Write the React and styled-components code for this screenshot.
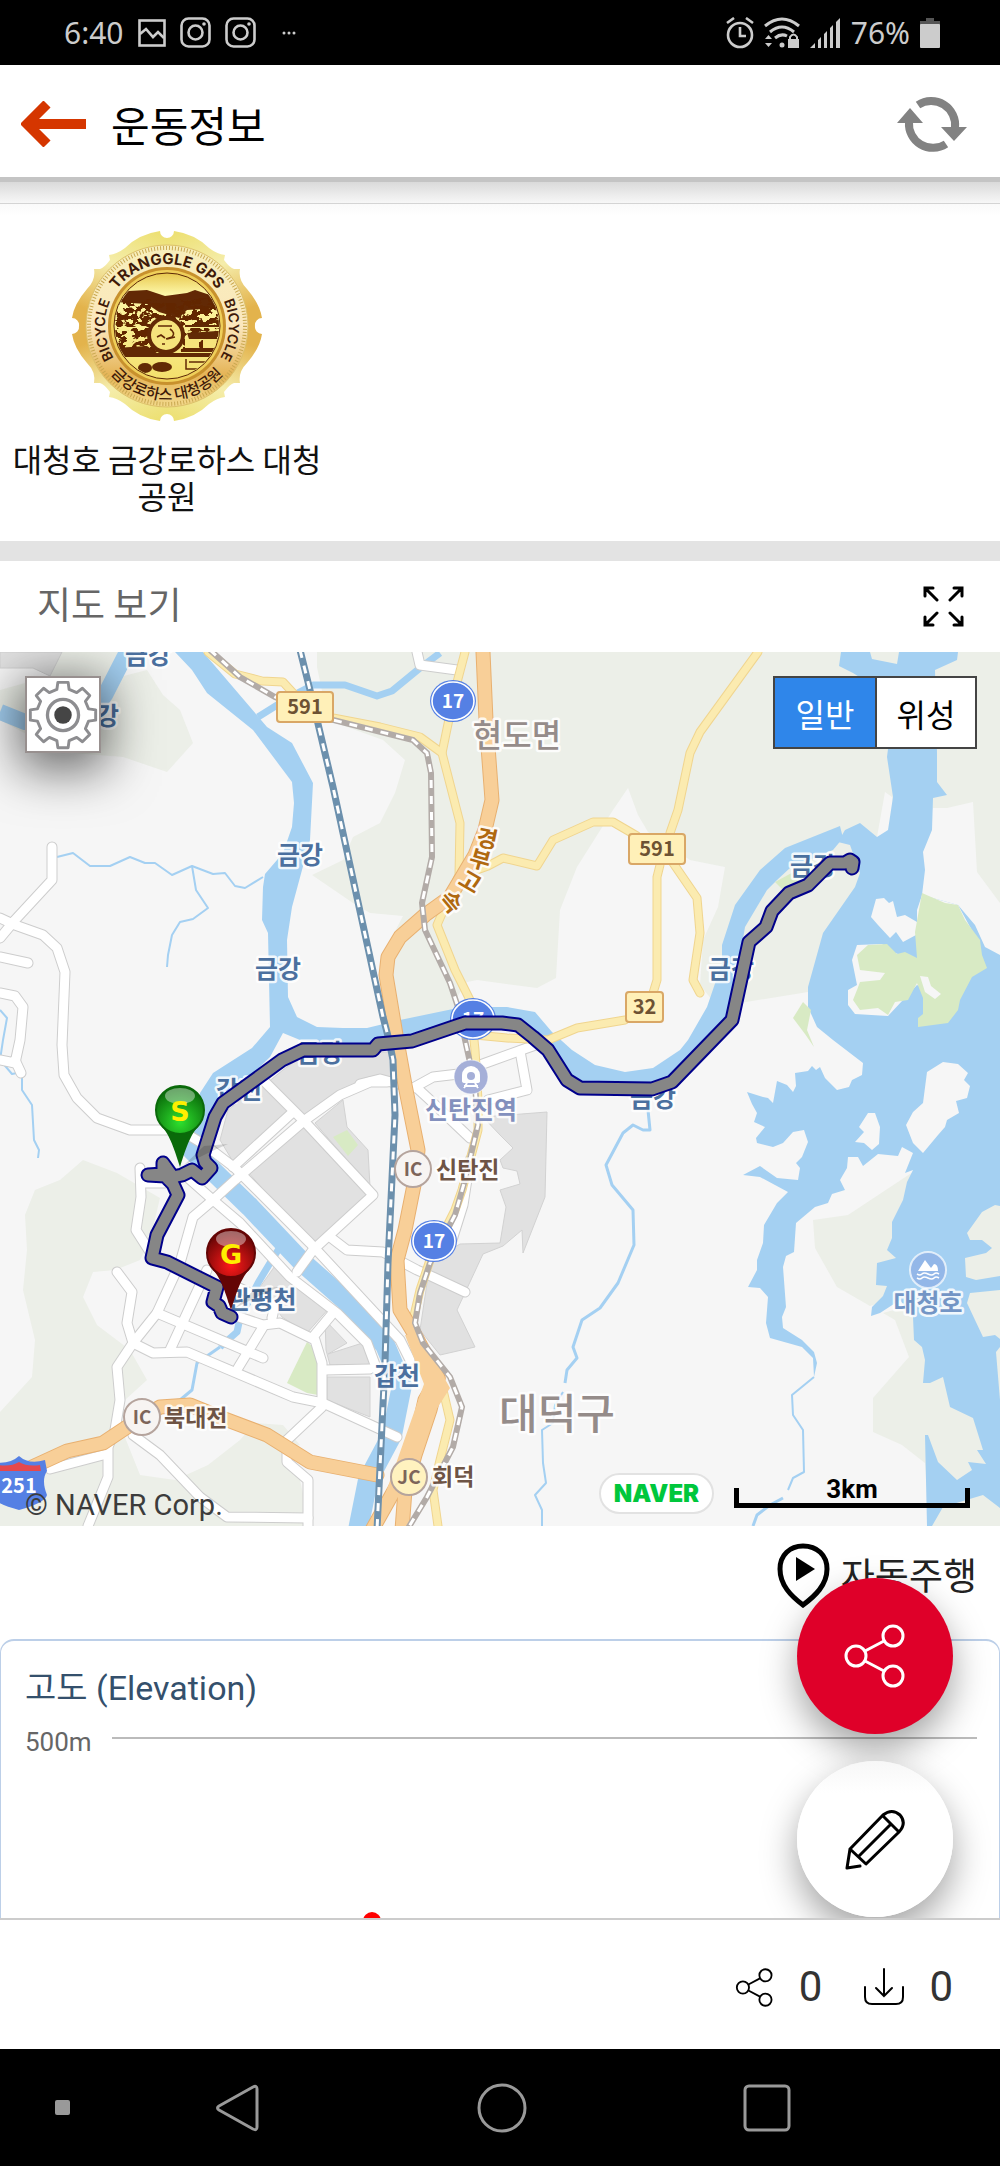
import React, { useState } from 'react';
import styled, { createGlobalStyle } from 'styled-components';

const GlobalStyle = createGlobalStyle`
    * { box-sizing: border-box; }
    body {
        margin: 0;
        background: #fff;
        font-family: Roboto, "Noto Sans CJK KR", sans-serif;
    }
    button {
        font-family: inherit;
        border: 0;
        padding: 0;
        margin: 0;
        background: none;
        color: inherit;
    }
    svg { display: block; }
`;

const Screen = styled.div`
    display: flex;
    flex-direction: column;
    height: 100vh;
    overflow: hidden;
`;

const StatusBar = styled.div`
    display: flex;
    justify-content: space-between;
    align-items: center;
    flex: none;
    height: 65px;
    padding: 0 60px 0 64px;
    background: #000;
    color: #ccc;
    font-family: "Noto Sans", sans-serif;
    font-size: 30px;
`;

const StatusGroup = styled.div`
    display: flex;
    align-items: center;
    gap: ${props => props.$gap}px;
`;

const Header = styled.header`
    display: flex;
    align-items: center;
    flex: none;
    height: 112px;
    padding: 5px 32px 0 21px;
    background: #fff;
`;

const Title = styled.h1`
    flex: 1;
    margin: 0 0 0 24px;
    padding-top: 8px;
    font-size: 42px;
    font-weight: 400;
    line-height: 60px;
    color: #000;
`;

const Content = styled.main`
    position: relative;
    flex: 1;
    min-height: 0;
    overflow: hidden;
`;

const HeaderShadow = styled.div`
    height: 27px;
    border-top: 5px solid #c4c4c4;
    border-bottom: 1px solid #d4d4d4;
    background: linear-gradient(#dadada, #f7f7f7);
`;

const BadgeSection = styled.section`
    padding: 26px 0 27px;
    background: linear-gradient(#fafafa, #fff 12px);
    border-bottom: 20px solid #e3e3e3;
`;

const Badge = styled.figure`
    display: flex;
    flex-direction: column;
    align-items: center;
    width: 334px;
    margin: 0;
`;

const BadgeName = styled.figcaption`
    margin-top: 18px;
    font-family: "Noto Sans CJK KR", sans-serif;
    font-size: 32px;
    line-height: 37px;
    text-align: center;
    color: #111;
    word-break: break-all;
`;

const MapHead = styled.div`
    display: flex;
    justify-content: space-between;
    align-items: center;
    height: 91px;
    padding: 0 36px 0 37px;
`;

const MapTitle = styled.h2`
    margin: 0 0 8px;
    font-family: "Noto Sans CJK KR", sans-serif;
    font-size: 37px;
    font-weight: 400;
    line-height: 54px;
    color: #666;
`;

const MapBox = styled.div`
    position: relative;
    overflow: hidden;
`;

const GearButton = styled.button`
    position: absolute;
    top: 24px;
    left: 25px;
    display: grid;
    place-items: center;
    width: 76px;
    height: 77px;
    border: 2px solid #98908f;
    background: #fff;
    box-shadow: 0 10px 50px 6px rgba(0, 0, 0, 0.6);
`;

const MapTypes = styled.div`
    position: absolute;
    top: 24px;
    right: 23px;
    display: flex;
    border: 2px solid #444;
    background: #fff;
`;

const MapType = styled.button`
    width: 100px;
    height: 69px;
    font-family: "Noto Sans CJK KR", sans-serif;
    font-size: 32px;
    line-height: 48px;
    background: ${props => (props.$on ? '#2f86ea' : '#fff')};
    color: ${props => (props.$on ? '#fff' : '#000')};

    & + & {
        border-left: 2px solid #444;
    }
`;

const Copyright = styled.small`
    position: absolute;
    left: 25px;
    bottom: 4px;
    font-size: 29px;
    line-height: 34px;
    color: #3c3c3c;
`;

const MapLegend = styled.div`
    position: absolute;
    right: 30px;
    bottom: 12px;
    display: flex;
    align-items: flex-end;
    gap: 20px;
`;

const NaverLogo = styled.span`
    width: 115px;
    height: 41px;
    border: 2px solid #e2e2e2;
    border-radius: 21px;
    background: #fff;
    color: #00c73c;
    font-family: Inter, sans-serif;
    font-size: 24px;
    font-weight: 900;
    line-height: 37px;
    text-align: center;
`;

const ScaleBar = styled.span`
    display: flex;
    justify-content: center;
    align-items: flex-end;
    width: 236px;
    height: 20px;
    margin-bottom: 6px;
    border: solid #000;
    border-width: 0 5px 5px;
    font-size: 26px;
    font-weight: 700;
    line-height: 27px;
    color: #000;
`;

const AutoPlayRow = styled.div`
    display: flex;
    justify-content: flex-end;
    height: 113px;
    padding: 17px 23px 0;
`;

const AutoPlay = styled.button`
    display: flex;
    align-items: flex-start;
    gap: 11px;
    font-family: "Noto Sans CJK KR", sans-serif;
    font-size: 37px;
    line-height: 62px;
    color: #222;
`;

const ChartCard = styled.section`
    height: 480px;
    padding: 24px 22px 0 24px;
    border: solid #bccfe8;
    border-width: 2px 1px;
    border-radius: 14px;
`;

const ChartTitle = styled.h3`
    margin: 0;
    font-size: 34px;
    font-weight: 400;
    line-height: 46px;
    color: #34506c;
`;

const ChartRow = styled.div`
    display: flex;
    align-items: flex-start;
    margin-top: 14px;
    color: #666;
    font-size: 26px;
    line-height: 34px;
`;

const Plot = styled.div`
    flex: 1;
    margin: 12px 0 0 20px;
    border-top: 2px solid #bbb;
`;

const Peak = styled.div`
    width: 18px;
    height: 18px;
    margin: 173px 0 0 251px;
    border-radius: 50%;
    background: #f00;
`;

const FabStack = styled.div`
    position: absolute;
    right: 47px;
    bottom: 1px;
    display: flex;
    flex-direction: column;
    gap: 27px;
`;

const Fab = styled.button`
    display: grid;
    place-items: center;
    width: 156px;
    height: 156px;
    border-radius: 50%;
    background: ${props => (props.$primary ? '#df0029' : 'linear-gradient(#f7f7f7, #fff 32px)')};
    color: ${props => (props.$primary ? '#fff' : '#000')};
    box-shadow: 0 16px 36px rgba(0, 0, 0, 0.36);
`;

const Footer = styled.footer`
    display: flex;
    justify-content: flex-end;
    align-items: center;
    flex: none;
    gap: 42px;
    height: 131px;
    padding: 5px 47px 0;
    border-top: 2px solid #ccc;
    background: #fff;
`;

const Counter = styled.button`
    display: flex;
    align-items: center;
    gap: 25px;
    font-size: 42px;
    line-height: 50px;
    color: #333;
`;

const NavBar = styled.nav`
    display: grid;
    grid-template-columns: 84px repeat(3, 1fr);
    flex: none;
    height: 117px;
    padding: 0 100px 0 20px;
    background: #000;
`;

const NavButton = styled.button`
    display: grid;
    place-items: center;
`;

const MapSvg = styled.svg`
    width: 100%;
    height: auto;
    font-family: "Noto Sans CJK KR", sans-serif;
    font-weight: 700;
`;

const Halo = styled.text`
    paint-order: stroke;
    stroke: #fff;
    stroke-opacity: 0.85;
    stroke-width: 5px;
    stroke-linejoin: round;
    fill: ${props => props.$color};
    font-size: ${props => props.$size}px;
    font-weight: ${props => props.$weight || 700};
    text-anchor: ${props => props.$anchor || 'middle'};
`;

const FOREST = [
    '62,652 120,652 108,680 147,670 163,695 180,710 193,743 167,772 123,757 60,752 0,720 0,690 50,676',
    '317,652 317,667 328,720 383,740 405,760 395,793 380,823 353,837 343,860 312,875 353,903 370,913 403,916 380,960 393,1022 455,1012 455,1000 467,982 477,980 537,988 556,978 560,910 577,867 613,810 628,788 638,815 648,832 690,860 725,867 718,907 703,940 700,985 720,1010 740,1003 808,992 1000,990 1000,652',
    '83,1160 117,1173 160,1198 150,1240 140,1260 115,1270 93,1272 83,1297 97,1325 130,1350 147,1380 125,1400 120,1425 130,1450 140,1475 175,1480 208,1465 240,1440 255,1423 283,1425 300,1445 283,1450 300,1480 310,1526 0,1526 0,1412 32,1377 35,1340 23,1290 27,1250 25,1215 35,1190 60,1180',
    '813,1220 848,1215 913,1172 930,1172 930,1300 883,1313 895,1320 909,1357 873,1398 873,1432 902,1445 925,1463 930,1526 1000,1526 1000,1320 920,1290 870,1306 837,1287 815,1248',
];

const CLEARING = [
    '885,792 892,797 896,830 877,837',
    '933,808 947,808 973,802 977,872 1000,903 1000,995 915,995 915,850',
];

const WATER = [
    // river
    '175,652 192,670 207,693 253,730 292,782 294,803 292,827 283,853 265,874 263,887 262,920 268,933 270,1027 252,1048 213,1073 200,1093 197,1140 207,1150 223,1103 270,1057 283,1033 300,1040 373,1048 412,1041 465,1023 502,1023 533,1037 548,1050 567,1080 580,1088 652,1089 672,1082 723,1030 735,1000 742,945 745,927 767,890 777,880 790,868 833,850 843,838 840,826 785,848 760,870 735,905 722,945 722,963 707,1007 688,1040 680,1050 653,1068 625,1072 595,1065 572,1050 552,1032 535,1012 507,1007 492,1007 453,1009 400,1020 367,1028 343,1028 317,1027 297,1017 288,997 287,940 292,907 302,870 310,840 313,783 292,743 267,727 203,652',
    // lake
    '841,652 839,666 853,673 880,690 888,749 887,757 893,797 888,830 877,837 860,823 845,830 838,842 850,845 860,873 855,887 823,933 808,987 808,1007 817,1027 833,1040 863,1063 862,1075 852,1080 849,1087 837,1090 825,1078 820,1067 816,1070 812,1066 808,1071 795,1073 796,1086 793,1092 787,1085 777,1081 773,1103 768,1098 763,1097 747,1092 752,1104 757,1113 754,1122 765,1127 756,1138 757,1143 773,1147 783,1143 793,1132 804,1130 808,1142 802,1157 796,1163 800,1168 798,1180 777,1178 760,1166 743,1175 760,1177 788,1192 777,1203 764,1225 763,1243 757,1260 757,1270 748,1287 760,1288 768,1297 766,1323 770,1338 802,1347 813,1358 814,1377 817,1363 814,1352 802,1340 783,1328 782,1317 786,1307 783,1267 786,1256 794,1252 796,1223 815,1207 828,1203 832,1194 845,1190 840,1180 847,1168 848,1157 858,1157 863,1166 878,1154 898,1156 902,1147 913,1153 905,1173 913,1170 907,1182 903,1200 892,1222 892,1238 887,1250 896,1258 877,1263 876,1285 887,1286 883,1296 872,1307 871,1316 880,1313 900,1300 913,1317 914,1340 922,1347 925,1360 923,1383 930,1383 943,1377 950,1407 973,1418 983,1450 977,1450 986,1464 968,1462 972,1470 957,1480 938,1462 928,1435 925,1435 927,1526 932,1526 943,1507 983,1495 1000,1508 1000,955 985,947 975,925 958,905 922,895 925,870 923,852 932,830 933,798 947,795 937,782 937,753 935,670 957,660 958,652',
];

const ISLANDS = [
    { fill: '#ecefe8', pts: '870,652 872,659 897,664 899,652' },
    { fill: '#f6f6f6', pts: '943,1062 958,1064 968,1073 964,1080 970,1086 967,1098 956,1101 959,1113 947,1120 945,1127 938,1135 923,1153 913,1143 906,1125 913,1112 923,1103 927,1072' },
    { fill: '#f6f6f6', pts: '868,1113 875,1113 880,1127 879,1144 872,1150 864,1143 855,1142 864,1132 859,1127' },
    { fill: '#f6f6f6', pts: '876,899 884,898 889,903 893,901 897,917 905,915 917,922 917,910 922,895 958,905 980,945 917,960 895,953 882,944 857,945 852,960 855,975 857,985 848,990 848,1005 855,1014 888,1016 917,985 948,1000 930,960 916,935 903,942 896,932 890,938 878,925 871,917' },
    { fill: '#ecefe8', pts: '1000,1206 995,1205 982,1212 967,1233 970,1240 982,1240 992,1248 986,1253 965,1258 966,1277 976,1280 1000,1276' },
    { fill: '#ecefe8', pts: '1000,1290 970,1293 967,1303 983,1337 995,1335 1000,1339' },
    { fill: '#ecefe8', pts: '1000,1347 996,1352 1000,1400' },
    { fill: '#d8eac4', pts: '922,893 945,903 958,905 965,920 980,940 982,955 987,968 972,977 960,1000 958,1010 948,1023 918,1027 918,1018 923,1014 923,998 917,983 908,1000 895,1002 888,1015 878,1008 860,1010 853,1000 857,990 860,982 880,980 885,973 860,970 857,955 868,945 887,944 897,954 905,952 917,958 915,932' },
    { fill: '#f6f6f6', pts: '920,976 928,977 931,986 941,994 935,999 925,992' },
    { fill: '#d8eac4', pts: '803,1002 811,1010 807,1030 814,1047 805,1034 793,1018' },
    { fill: '#d8eac4', pts: '775,882 812,862 830,862 812,885 785,892' },
];

const URBAN = [
    '0,652 62,652 50,676 33,668 0,668',
    '283,1070 302,1056 380,1052 392,1052 392,1085 370,1080 345,1095 305,1118 267,1083',
    '235,1165 220,1140 228,1110 262,1083 288,1110',
    '248,1172 303,1127 370,1195 328,1238 313,1247',
    '343,1100 347,1127 368,1150 370,1187 315,1123',
    '277,1263 330,1307 307,1333 282,1317 260,1287',
    '325,1320 347,1343 328,1354 372,1340 376,1365 330,1365 326,1350',
    '327,1377 370,1377 370,1417 327,1400',
    '483,1117 547,1112 545,1197 523,1253 522,1230 503,1246 483,1254 457,1310 475,1347 440,1355 420,1330 430,1263 460,1244 500,1243 503,1225 506,1207 500,1190 520,1184 517,1171 503,1168 500,1160 513,1148 500,1135',
];

const PARKS = [
    '333,1137 347,1130 358,1145 348,1156',
    '307,1342 317,1350 318,1395 307,1393 287,1383',
];

const STREAMS = [
    { w: 7, pts: '258,717 290,697 313,685 345,685 377,696 392,691 420,668 440,653' },
    { w: 16, pts: '128,650 105,695 88,718 25,722 0,712' },
    { w: 2, pts: '57,857 73,853 90,866 110,866 130,857 145,863 155,863 172,875 192,866 213,874 225,873 235,886 245,888 263,877' },
    { w: 2, pts: '192,866 196,890 208,908 193,919 180,922 172,935 168,955 167,967' },
    { w: 2, pts: '0,1010 7,1018 3,1040 0,1060 12,1074 22,1072 22,1090 32,1105 34,1140 39,1150 38,1158' },
    { w: 3, pts: '648,1110 650,1130 643,1130 633,1125 623,1133 606,1165 612,1185 633,1210 634,1245 618,1283 600,1308 582,1320 573,1347 577,1358 567,1370 565,1383' },
    { w: 2, pts: '563,1392 555,1405 553,1423 542,1430 543,1463 546,1483 535,1495 542,1510 542,1526' },
    { w: 2, pts: '814,1377 792,1395 793,1415 803,1430 804,1472 793,1478 788,1490' },
    { w: 3, pts: '783,1498 770,1505 757,1515 753,1526' },
    { w: 7, pts: '280,1247 270,1263 258,1283 240,1318 237,1332 220,1347' },
    { w: 3, pts: '220,1347 197,1363 192,1390 180,1400 157,1403' },
    { w: 20, pts: '193,1110 192,1150 215,1173 250,1207 302,1262 345,1300 385,1345 402,1385 392,1435 368,1480 358,1530' },
];

const STREETS = [
    '52,847 52,880 15,920 0,938',
    '0,918 15,925 43,935 57,948 65,972 62,1045 64,1075 77,1098 97,1118 130,1130 180,1130 205,1145 235,1168 310,1243 400,1340 410,1360',
    '0,957 28,963',
    '0,993 15,996 23,1007 20,1040 15,1063 0,1060',
    '15,1060 21,1073',
    '165,1183 142,1183',
    '140,1168 141,1197 136,1230 150,1252',
    '187,1177 213,1200 240,1223 290,1277 337,1313 367,1343 377,1370',
    '213,1200 235,1180 305,1120 340,1095 370,1082 387,1082',
    '265,1082 305,1122 373,1195 313,1250 297,1272',
    '233,1167 293,1112',
    '213,1200 193,1217 180,1263 157,1313 133,1343 117,1367 120,1400 115,1430 108,1447 108,1477 88,1526',
    '117,1272 132,1292 127,1323 133,1343',
    '133,1343 153,1353 187,1352 293,1397 323,1403 397,1437',
    '157,1313 263,1358',
    '207,1270 170,1350',
    '263,1327 238,1368',
    '233,1285 275,1305 272,1318',
    '233,1315 263,1325 280,1323 315,1340 322,1363 322,1407 287,1440 287,1462 308,1480 308,1526',
    '333,1313 313,1337',
    '325,1370 370,1369',
    '133,1435 160,1455 200,1497 227,1517 308,1518',
    '330,1237 347,1250 383,1252 417,1270 433,1277 465,1292',
    '50,1469 103,1455',
    '360,1084 380,1079 413,1088 433,1077 467,1073 480,1065 527,1048 547,1041',
    '520,1051 527,1090 488,1100',
    '417,1088 430,1100 470,1138',
    '470,1160 463,1205 452,1240',
    '417,652 420,665 457,670',
];

const YELLOW_ROADS = [
    '208,652 235,674 262,681 283,682 295,695 333,718 380,727 420,737 442,753 460,823 459,875 437,925 455,970 470,1000 475,1050 478,1100 478,1130 462,1190 455,1210 430,1260 420,1290 413,1320',
    '443,1390 450,1420 440,1460 433,1490 438,1526',
    '465,652 455,690 442,753',
    '460,876 488,866 503,858 537,866 553,840 593,822 613,822 637,836',
    '758,652 700,732 690,753 678,810 670,833',
    '660,865 657,877 657,980 653,993',
    '673,863 697,898 700,933 693,980 700,993',
    '625,1020 577,1028 548,1040 507,1038 475,1035',
];

const HIGHWAYS = [
    '483,652 486,720 492,800 485,830 475,855 450,897 425,915 400,937 388,957 386,975 396,1035 405,1085 418,1150 415,1180 405,1230 397,1260 400,1310 415,1335 438,1378 425,1400 416,1440 400,1480 372,1530',
    '438,1378 430,1410 415,1455 405,1490 402,1530',
    '0,1495 30,1468 67,1451 103,1443 133,1423 160,1407 190,1405 222,1418 267,1435 310,1462 377,1475',
];

const RAIL = '210,650 240,677 275,697 333,720 393,735 413,740 427,753 431,773 432,857 422,903 425,930 450,983 458,1007 465,1040 475,1085 478,1125 465,1180 455,1215 430,1263 420,1293 415,1323 423,1343 450,1377 462,1407 453,1447 427,1497 407,1530';
const KTX_RAIL = '300,650 310,690 333,787 383,1017 389,1040 393,1060 395,1115 388,1263 385,1363 377,1530';

const ROUTE = '852,868 853,862 850,860 845,863 830,863 808,885 789,893 772,911 766,927 749,942 732,1020 672,1082 652,1089 580,1088 567,1080 548,1050 533,1037 518,1025 502,1023 465,1023 412,1041 378,1044 373,1050 303,1050 282,1060 223,1103 215,1117 203,1155 205,1162 211,1168 202,1178 192,1170 182,1175 173,1177 163,1163 163,1174 148,1175 165,1176 173,1184 178,1195 157,1235 152,1258 167,1262 217,1287 213,1302 219,1306 222,1313 231,1317';

const RIVER_LABELS = [
    [148, 664, '금강'], [96, 725, '금강'], [300, 864, '금강'], [278, 978, '금강'], [320, 1062, '금강'],
    [813, 875, '금강'], [731, 978, '금강'], [653, 1107, '금강'], [239, 1099, '갑천'], [397, 1385, '갑천'],
    [262, 1309, '관평천'],
];

const HIGHWAY_LABEL = [
    [487, 839, 12, '경'], [480, 860, 16, '부'], [470, 882, 30, '고'], [451, 902, 50, '속'],
];

const Road = ({ list, edge, fill, width }) => (
    <g fill="none" strokeLinejoin="round" strokeLinecap="round">
        {list.map(p => <polyline key={p} points={p} stroke={edge} strokeWidth={width + 2} />)}
        {list.map(p => <polyline key={p} points={p} stroke={fill} strokeWidth={width} />)}
    </g>
);

const Railway = ({ points, color, width }) => (
    <g fill="none">
        <polyline points={points} stroke={color} strokeWidth={width} />
        <polyline points={points} stroke="#fff" strokeWidth="3" strokeDasharray="8 8" />
    </g>
);

const LocalRoad = ({ x, y, w, children }) => (
    <g>
        <rect x={x} y={y} width={w} height="30" rx="3" fill="#fff0b8" stroke="#d9a766" strokeWidth="2" />
        <text x={x + w / 2} y={y + 22} fontSize="20" textAnchor="middle" fill="#6d5233">{children}</text>
    </g>
);

const NationalRoad = ({ x, y }) => (
    <g>
        <ellipse cx={x} cy={y} rx="23" ry="21" fill="#5580e4" />
        <ellipse cx={x} cy={y} rx="21" ry="19" fill="none" stroke="#fff" strokeWidth="1.6" />
        <text x={x} y={y + 7} fontSize="19" textAnchor="middle" fill="#fff">17</text>
    </g>
);

const Junction = ({ x, y, fill, children }) => (
    <g>
        <circle cx={x} cy={y} r="18" fill={fill} stroke="#b5a49d" strokeWidth="2" />
        <text x={x} y={y + 7} fontSize="19" textAnchor="middle" fill="#7d655a">{children}</text>
    </g>
);

const Pin = ({ x, y, from, to, id, children }) => (
    <g transform={`translate(${x} ${y})`}>
        <defs>
            <radialGradient id={id} cx="50%" cy="75%" r="70%">
                <stop offset="0" stopColor={to} />
                <stop offset="1" stopColor={from} />
            </radialGradient>
        </defs>
        <path d="M4 55 L24 36 L48 34 L30 42 Z" fill="#000" opacity="0.14" />
        <path d="M-20 14 C-12 24 -9 28 0 57 C9 28 12 24 20 14 Z" fill={from} />
        <circle r="24" fill={`url(#${id})`} stroke={from} strokeWidth="2" />
        <ellipse cy="-14" rx="15" ry="8" fill="#fff" opacity="0.4" />
        <text y="11" fontFamily="DejaVu Sans, sans-serif" fontSize="27" fontWeight="700" textAnchor="middle" fill="#ffef00">
            {children}
        </text>
    </g>
);

const TrackMap = () => (
    <MapSvg viewBox="0 652 1000 874" role="img" aria-label="운동 경로 지도">
        <rect y="652" width="1000" height="874" fill="#f6f6f6" />
        {FOREST.map(p => <polygon key={p} points={p} fill="#ecefe8" />)}
        {CLEARING.map(p => <polygon key={p} points={p} fill="#f6f6f6" />)}
        {URBAN.map(p => <polygon key={p} points={p} fill="#e1e1e1" stroke="#d2d2d2" />)}
        {PARKS.map(p => <polygon key={p} points={p} fill="#d8eac4" />)}
        {WATER.map(p => <polygon key={p} points={p} fill="#a4d0f2" />)}
        {ISLANDS.map(i => <polygon key={i.pts} points={i.pts} fill={i.fill} />)}
        {STREAMS.map(s => (
            <polyline key={s.pts} points={s.pts} fill="none" stroke="#a4d0f2" strokeWidth={s.w} strokeLinejoin="round" />
        ))}
        <Road list={STREETS} edge="#cdcdcd" fill="#fff" width={9} />
        <Road list={YELLOW_ROADS} edge="#f0d58f" fill="#fbebb0" width={7} />
        <Road list={HIGHWAYS} edge="#e8b070" fill="#f8cf98" width={13} />
        <polygon points="405,1335 420,1335 450,1388 436,1410 420,1440 395,1500 385,1495 424,1384" fill="#f8cf98" />
        <Railway points={RAIL} color="#b2aba7" width="6" />
        <Railway points={KTX_RAIL} color="#6c90ad" width="7" />

        <NationalRoad x={453} y={701} />
        <NationalRoad x={473} y={1019} />
        <NationalRoad x={434} y={1241} />
        <LocalRoad x={277} y={692} w={56}>591</LocalRoad>
        <LocalRoad x={629} y={834} w={56}>591</LocalRoad>
        <LocalRoad x={626} y={992} w={37}>32</LocalRoad>

        {RIVER_LABELS.map(([x, y, name]) => (
            <Halo key={`${x}-${y}`} x={x} y={y} $size={25} $color="#4b709f">{name}</Halo>
        ))}
        {HIGHWAY_LABEL.map(([x, y, angle, char]) => (
            <Halo key={char} transform={`translate(${x} ${y}) rotate(${angle})`} y="8" $size={23} $color="#b0690f">{char}</Halo>
        ))}
        <Halo x="517" y="747" $size={32} $color="#958c8a" $weight={500}>현도면</Halo>
        <Halo x="557" y="1429" $size={42} $color="#958c8a" $weight={500}>대덕구</Halo>
        <Halo x="471" y="1119" $size={25} $color="#8390bd">신탄진역</Halo>
        <Halo x="928" y="1312" $size={25} $color="#7395c5">대청호</Halo>
        <Halo x="436" y="1178" $size={23} $color="#6e5445" $anchor="start">신탄진</Halo>
        <Halo x="164" y="1426" $size={23} $color="#6e5445" $anchor="start">북대전</Halo>
        <Halo x="432" y="1485" $size={23} $color="#6e5445" $anchor="start">회덕</Halo>
        <Junction x={413} y={1169} fill="#f7f4f2">IC</Junction>
        <Junction x={142} y={1417} fill="#f7f4f2">IC</Junction>
        <Junction x={409} y={1477} fill="#fff2bf">JC</Junction>

        {/* station */}
        <g transform="translate(471 1077)">
            <circle r="17" fill="#a5afd8" stroke="#fff" strokeOpacity="0.6" />
            <path d="M-7 11 L-4 6 M7 11 L4 6 M-7 9 H7" stroke="#fff" strokeWidth="2" />
            <path d="M-9 4 V-2 A9 9 0 0 1 9 -2 V4 Q9 6 6 6 H-6 Q-9 6 -9 4 Z" fill="#fff" />
            <circle cy="-1" r="4" fill="#a5afd8" />
        </g>

        {/* lake */}
        <g transform="translate(928 1270)">
            <circle r="18" fill="#93b7e8" stroke="#fff" strokeOpacity="0.7" strokeWidth="2" />
            <path d="M-10 1 L-3 -10 L3 -2 L6 -6 Q10 -6 10 1 Z" fill="#fff" />
            <path d="M-11 4 q3 2 5 0 t6 0 t6 0 t5 0 M-11 8 q3 2 5 0 t6 0 t6 0 t5 0" fill="none" stroke="#fff" strokeWidth="1.6" />
        </g>

        {/* expressway 251 */}
        <g transform="translate(19 1483)">
            <path d="M-26 -21 Q-10 -18 0 -27 Q10 -18 26 -23 L28 -12 Q22 -3 28 12 Q26 20 0 27 Q-26 20 -28 12 Z" fill="#5580e4" />
            <path d="M-22 -12 V-18 Q-8 -16 0 -21 Q8 -16 21 -18 L22 -12 Z" fill="#e5484d" />
            <text y="10" fontSize="20" textAnchor="middle" fill="#fff">251</text>
        </g>

        <g fill="none" strokeLinejoin="round" strokeLinecap="round">
            <polyline points={ROUTE} stroke="#00008b" strokeWidth="15" />
            <polyline points={ROUTE} stroke="#868686" strokeWidth="11" />
        </g>
        <Pin x={180} y={1110} id="pinStart" from="#0a6a0a" to="#2ee02e">S</Pin>
        <Pin x={231} y={1253} id="pinGoal" from="#640505" to="#ff1a1a">G</Pin>
    </MapSvg>
);

// One quarter of the scalloped rim, mirrored to get the other three
const RIM = 'M0 0 V-88 A7 7 0 0 0 7 -95 Q28 -92 42 -78 Q50 -72 58 -71 L57 -66 Q63 -58 67 -57 L73 -57 Q71 -46 80 -37 Q93 -22 95 -8 A7 7 0 0 0 88 0 Z';

const Medal = () => (
    <svg width="192" height="192" viewBox="-96 -96 192 192" role="img" aria-label="트랭글 배지">
        <defs>
            <linearGradient id="rim" x1="0" y1="0" x2="0.4" y2="1">
                <stop offset="0" stopColor="#ecdf6e" />
                <stop offset="0.5" stopColor="#f5edab" />
                <stop offset="1" stopColor="#e3b34c" />
            </linearGradient>
            <linearGradient id="band" x1="0" y1="0" x2="0" y2="1">
                <stop offset="0" stopColor="#f7efbb" />
                <stop offset="0.5" stopColor="#fbe7bd" />
                <stop offset="0.8" stopColor="#e5b457" />
                <stop offset="1" stopColor="#f3da8e" />
            </linearGradient>
            <linearGradient id="coin" x1="0" y1="0" x2="0" y2="1">
                <stop offset="0" stopColor="#e8c84e" />
                <stop offset="0.2" stopColor="#fdf7a8" />
                <stop offset="1" stopColor="#f4df6c" />
            </linearGradient>
            <clipPath id="coinClip"><circle r="52" /></clipPath>
            <filter id="grain" x="0" y="0" width="1" height="1">
                <feTurbulence type="fractalNoise" baseFrequency="0.12 0.18" numOctaves="3" seed="4" />
                <feColorMatrix values="0 0 0 0 0.12  0 0 0 0 0.02  0 0 0 0 0  22 0 0 0 -10.2" />
                <feComposite in2="SourceGraphic" operator="in" />
            </filter>
            <path id="topArc" d="M0 62 A62 62 0 0 1 0 -62 A62 62 0 0 1 0 62" />
            <path id="bottomArc" d="M-74 0 A74 74 0 0 0 74 0" />
        </defs>
        {['1 1', '-1 1', '1 -1', '-1 -1'].map(s => (
            <path key={s} d={RIM} transform={`scale(${s})`} fill="url(#rim)" />
        ))}
        <circle r="81" fill="url(#band)" stroke="#dcc069" />
        <circle r="78" fill="none" stroke="#c9a850" strokeWidth="4" strokeDasharray="1 2" />
        <circle r="59" fill="#c8912d" />
        <circle r="56" fill="#efcf5a" />
        <circle r="53" fill="url(#coin)" stroke="#5c2706" />
        <g clipPath="url(#coinClip)">
            <path d="M-54 -32 L-38 -35 L-20 -36 L-2 -30 L20 -33 L28 -36 L40 -32 L54 -30 V-18 L20 -16 L12 -8 L-8 -14 L-20 -22 L-54 -24 Z" fill="#622905" />
            <rect x="-54" y="-27" width="108" height="28" fill="#000" filter="url(#grain)" />
            <rect x="16" y="-28" width="26" height="26" fill="#000" filter="url(#grain)" />
            <rect x="-54" y="2" width="108" height="24" fill="#000" filter="url(#grain)" />
            <path d="M-54 22 L-20 20 L-10 27 H54 V31 H-54 Z M20 7 L50 5 V13 H22 Z M16 22 H54 V26 H16 Z M18 -1 H54 V1 H18 Z" fill="#622905" />
            <path d="M18 13 H32 V22 H18 Z M36 13 H50 V22 H36 Z" fill="#f6e47c" />
            <ellipse cx="-22" cy="42" rx="7" ry="5" fill="#622905" />
            <ellipse cx="-5" cy="41" rx="10" ry="5" fill="#622905" />
            <path d="M19 33 V43 H42 M22 36 H46" fill="none" stroke="#622905" strokeWidth="1.5" />
            <circle cx="-1" cy="9" r="17" fill="#f6e47c" stroke="#622905" strokeWidth="4" />
            <path d="M-9 0 h14 M3 3 q6 4 2 8 l-6 2 M-10 11 l4 -2 l4 3 M0 13 l8 -2 M-5 18 h3" fill="none" stroke="#622905" strokeWidth="1.6" />
        </g>
        <g fill="#3e1a08" fontFamily="Inter, sans-serif" fontWeight="700" textAnchor="middle">
            <text fontSize="15"><textPath href="#topArc" startOffset="50%">TRANGGLE GPS</textPath></text>
            <text fontSize="14" fontWeight="600"><textPath href="#topArc" startOffset="24%">BICYCLE</textPath></text>
            <text fontSize="14" fontWeight="600"><textPath href="#topArc" startOffset="76%">BICYCLE</textPath></text>
            <text fontSize="15" fontWeight="500" fontFamily="Noto Sans CJK KR, sans-serif">
                <textPath href="#bottomArc" startOffset="50%">금강로하스 대청공원</textPath>
            </text>
        </g>
    </svg>
);

const gearPath = () => {
    const pts = [];
    for (let i = 0; i < 8; i++) {
        [[-15, 27], [-10, 34], [10, 34], [15, 27]].forEach(([off, r]) => {
            const a = ((i * 45 + off * 0.9) * Math.PI) / 180;
            pts.push(`${(r * Math.sin(a)).toFixed(1)} ${(-r * Math.cos(a)).toFixed(1)}`);
        });
    }
    return `M${pts.join(' L')} Z`;
};

const GearIcon = () => (
    <svg width="70" height="70" viewBox="-36 -36 72 72">
        <path d={gearPath()} fill="none" stroke="#8d8d90" strokeWidth="3" strokeLinejoin="round" />
        <circle r="16" fill="none" stroke="#8d8d90" strokeWidth="3.4" />
        <circle r="9" fill="#454545" />
    </svg>
);

const ShareIcon = ({ size, weight, color = 'currentColor' }) => (
    <svg width={size} height={size} viewBox="0 0 64 64" fill="none" stroke={color} strokeWidth={weight}>
        <circle cx="13" cy="32" r="10" />
        <circle cx="50" cy="12" r="10" />
        <circle cx="50" cy="52" r="10" />
        <path d="M22 27 L41 17 M22 37 L41 47" />
    </svg>
);

const InstagramIcon = () => (
    <svg width="31" height="31" viewBox="0 0 31 31" fill="none" stroke="#ccc" strokeWidth="2.6">
        <rect x="1.5" y="1.5" width="28" height="28" rx="7" />
        <circle cx="15.5" cy="15.5" r="7" />
        <circle cx="24" cy="7" r="1.8" fill="#ccc" stroke="none" />
    </svg>
);

const StatusIcons = () => (
    <>
        <svg width="28" height="28" viewBox="0 0 28 28" fill="none" stroke="#ccc" strokeWidth="2.6">
            <rect x="1.5" y="1.5" width="25" height="25" />
            <path d="M2 15 L8 10 L15 18 L20 13 L26 19" />
        </svg>
        <InstagramIcon />
        <InstagramIcon />
    </>
);

const AlarmIcon = () => (
    <svg width="28" height="32" viewBox="0 0 28 32" fill="none" stroke="#ccc" strokeWidth="2.6">
        <circle cx="14" cy="18" r="12" />
        <path d="M14 10 V19 H20 M1 6 L8 1 M27 6 L20 1" />
    </svg>
);

const WifiIcon = () => (
    <svg width="36" height="32" viewBox="0 0 36 32" fill="none" stroke="#ccc" strokeWidth="3">
        <path d="M1 9 Q18 -5 35 9 M6 15 Q18 5 30 15 M11 21 Q17 16 23 19" />
        <circle cx="18" cy="28" r="2.5" fill="#ccc" stroke="none" />
        <path d="M1 22 L4.5 18 L8 22 Z M1 26 L4.5 30 L8 26 Z M24 22 H35 V31 H24 Z" fill="#ccc" stroke="none" />
        <path d="M26 23 V20 Q29.5 15 33 20 V23" strokeWidth="2" />
    </svg>
);

const SignalIcon = () => (
    <svg width="31" height="32" viewBox="0 0 31 32" fill="#ccc">
        <path d="M0 31 L5 26 V31 Z M8 23 L11 20 V31 H8 Z M14 17 L17 14 V31 H14 Z M20 11 L23 8 V31 H20 Z M26 5 L30 1 V31 H26 Z" />
    </svg>
);

const BatteryIcon = () => (
    <svg width="20" height="32" viewBox="0 0 20 32">
        <path d="M6 1 H14 V4 H20 V9 H0 V4 H6 Z" fill="#555" />
        <rect y="7" width="20" height="24" rx="1" fill="#ccc" />
    </svg>
);

const App = () => {
    const [mapType, setMapType] = useState('일반');

    return (
        <Screen>
            <GlobalStyle />
            <StatusBar>
                <StatusGroup $gap={14}>
                    <span>6:40</span>
                    <StatusIcons />
                    <svg width="40" height="6" viewBox="0 0 40 6" fill="#ccc">
                        <circle cx="14" cy="3" r="1.5" />
                        <circle cx="19" cy="3" r="1.5" />
                        <circle cx="24" cy="3" r="1.5" />
                    </svg>
                </StatusGroup>
                <StatusGroup $gap={10}>
                    <AlarmIcon />
                    <WifiIcon />
                    <SignalIcon />
                    <span>76%</span>
                    <BatteryIcon />
                </StatusGroup>
            </StatusBar>

            <Header>
                <button type="button" aria-label="뒤로">
                    <svg width="66" height="46" viewBox="0 0 66 46" fill="none" stroke="#d53600" strokeWidth="10">
                        <path d="M65 23 H9 M26 3 L6 23 L26 43" />
                    </svg>
                </button>
                <Title>운동정보</Title>
                <button type="button" aria-label="새로고침">
                    <svg width="72" height="58" viewBox="-36 -29 72 58">
                        <path d="M-14 -19 A24 24 0 0 1 23 4 M14 20 A24 24 0 0 1 -23 -2" fill="none" stroke="#828282" strokeWidth="8" />
                        <path d="M9 3 H35 L22 17 Z M-9 -1 H-35 L-22 -16 Z" fill="#828282" />
                    </svg>
                </button>
            </Header>

            <Content>
                <HeaderShadow />
                <BadgeSection>
                    <Badge>
                        <Medal />
                        <BadgeName>대청호 금강로하스 대청공원</BadgeName>
                    </Badge>
                </BadgeSection>

                <MapHead>
                    <MapTitle>지도 보기</MapTitle>
                    <button type="button" aria-label="전체 화면">
                        <svg width="41" height="41" viewBox="0 0 41 41" fill="none" stroke="#000" strokeWidth="3" strokeLinecap="round">
                            <path d="M2 10 V2 H10 M2 2 L14 14 M31 2 H39 V10 M39 2 L27 14 M2 31 V39 H10 M2 39 L14 27 M31 39 H39 V31 M39 39 L27 27" />
                        </svg>
                    </button>
                </MapHead>

                <MapBox>
                    <TrackMap />
                    <GearButton type="button" aria-label="지도 설정"><GearIcon /></GearButton>
                    <MapTypes>
                        {['일반', '위성'].map(type => (
                            <MapType key={type} type="button" $on={mapType === type} onClick={() => setMapType(type)}>
                                {type}
                            </MapType>
                        ))}
                    </MapTypes>
                    <Copyright>© NAVER Corp.</Copyright>
                    <MapLegend>
                        <NaverLogo>NAVER</NaverLogo>
                        <ScaleBar>3km</ScaleBar>
                    </MapLegend>
                </MapBox>

                <AutoPlayRow>
                    <AutoPlay type="button">
                        <svg width="53" height="65" viewBox="0 0 53 65">
                            <path d="M26 3 C40 3 50 12 50 26 C50 42 38 53 26 62 C14 53 3 42 3 26 C3 12 13 3 26 3 Z" fill="#fff" stroke="#000" strokeWidth="5" />
                            <path d="M19 14 L38 26 L19 38 Z" fill="#000" />
                        </svg>
                        자동주행
                    </AutoPlay>
                </AutoPlayRow>

                <ChartCard>
                    <ChartTitle>고도 (Elevation)</ChartTitle>
                    <ChartRow>
                        500m
                        <Plot><Peak /></Plot>
                    </ChartRow>
                </ChartCard>

                <FabStack>
                    <Fab type="button" $primary aria-label="공유">
                        <ShareIcon size={64} weight={3} />
                    </Fab>
                    <Fab type="button" aria-label="편집">
                        <svg width="61" height="61" viewBox="0 0 61 61" fill="none" stroke="#000" strokeWidth="3" strokeLinejoin="round" strokeLinecap="round">
                            <path d="M38 6 L5 40 L21 55 L54 23 M38 6 Q47 -1 55 6 Q62 14 54 23 L38 7 M45 16 L14 47 M5 40 L2 59 L15 57" />
                        </svg>
                    </Fab>
                </FabStack>
            </Content>

            <Footer>
                <Counter type="button">
                    <ShareIcon size={39} weight={3} color="#000" />
                    0
                </Counter>
                <Counter type="button">
                    <svg width="40" height="38" viewBox="0 0 40 38" fill="none" stroke="#000" strokeWidth="2" strokeLinecap="round">
                        <path d="M20 1 V28 M12 20 L20 28 L28 20 M1 19 V29 Q1 36 8 36 H32 Q39 36 39 29 V19" />
                    </svg>
                    0
                </Counter>
            </Footer>

            <NavBar>
                <NavButton type="button" aria-label="고정">
                    <svg width="15" height="15"><rect width="15" height="15" rx="2" fill="#999" /></svg>
                </NavButton>
                <NavButton type="button" aria-label="뒤로">
                    <svg width="44" height="48" viewBox="0 0 44 48" fill="none" stroke="#999" strokeWidth="3" strokeLinejoin="round">
                        <path d="M38 3 Q42 1 42 5 V43 Q42 47 38 45 L4 26 Q1 24 4 22 Z" />
                    </svg>
                </NavButton>
                <NavButton type="button" aria-label="홈">
                    <svg width="50" height="50"><circle cx="25" cy="25" r="23" fill="none" stroke="#999" strokeWidth="3" /></svg>
                </NavButton>
                <NavButton type="button" aria-label="최근 앱">
                    <svg width="48" height="48"><rect x="2" y="2" width="44" height="44" rx="4" fill="none" stroke="#999" strokeWidth="3" /></svg>
                </NavButton>
            </NavBar>
        </Screen>
    );
};

export default App;
